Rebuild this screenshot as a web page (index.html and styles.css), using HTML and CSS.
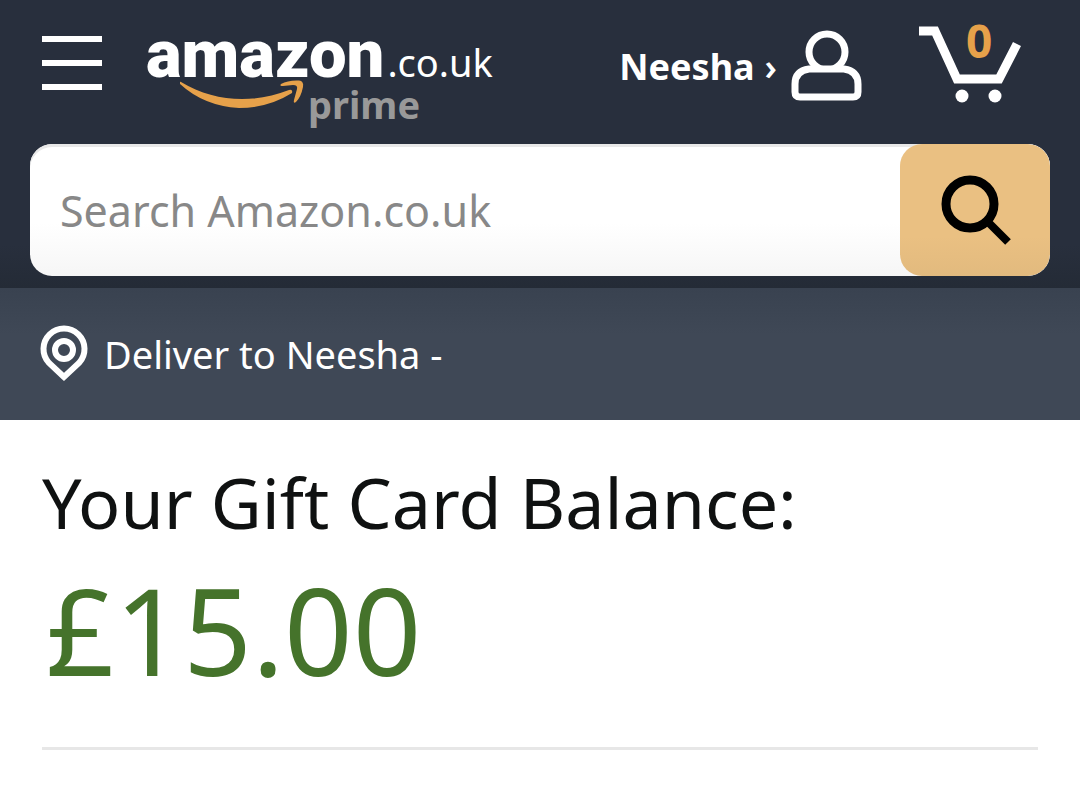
FILE: index.html
```html
<!DOCTYPE html>
<html lang="en-GB">
<head>
    <meta charset="utf-8">
    <meta name="viewport" content="width=device-width, initial-scale=1">
    <title>Your Gift Card Balance</title>
    <link rel="stylesheet" href="styles.css">
</head>
<body>
    <header class="header">
        <div class="nav-top">
            <button class="menu-button" type="button" aria-label="Menu">
                <span></span>
                <span></span>
                <span></span>
            </button>
            <a class="logo" href="#" aria-label="Amazon.co.uk Prime">
                <span class="logo-main">
                    <span class="logo-name">amazon</span><span class="logo-domain">.co.uk</span>
                </span>
                <span class="logo-sub">
                    <svg class="smile" width="124" height="29" viewBox="0 0 124 29" aria-hidden="true">
                        <path d="M1 2C34 22 73 24 109 10Q113 9 112 13Q88 28 59 28Q24 26 0 4Q-1 1 1 2Z" fill="#e6a14a"/>
                        <path d="M101 4Q108 0 119 .5Q124 1 123 7Q121 17 116 22Q113 24 114 20L117 9Q118 5 113 5L103 6Q99 6 101 4Z" fill="#e6a14a"/>
                    </svg>
                    <span class="logo-prime">prime</span>
                </span>
            </a>
            <a class="account" href="#">
                <span class="account-name">Neesha</span>
                <span class="account-arrow">›</span>
                <svg width="72" height="72" viewBox="0 0 72 72" fill="none" stroke="#fff" stroke-width="7" aria-hidden="true">
                    <circle cx="36" cy="22" r="18"/>
                    <path d="M18 39H53Q67 41 67 54V62Q67 67 62 67H9Q4 67 4 62V54Q4 41 18 39Z" fill="#282f3d" stroke-linejoin="round"/>
                </svg>
            </a>
            <a class="cart" href="#" aria-label="Basket, 0 items">
                <svg width="104" height="80" viewBox="0 0 104 80" aria-hidden="true">
                    <path d="M1 7H17L39 55H81L99 20" fill="none" stroke="#fff" stroke-width="9"/>
                    <circle cx="44" cy="72" r="6.500" fill="#fff"/>
                    <circle cx="77" cy="72" r="6.500" fill="#fff"/>
                </svg>
                <span class="cart-count">0</span>
            </a>
        </div>
        <form class="search">
            <input class="search-input" type="text" placeholder="Search Amazon.co.uk" aria-label="Search Amazon.co.uk">
            <button class="search-button" type="button" aria-label="Go">
                <svg width="72" height="72" viewBox="0 0 72 72" fill="none" stroke="#000" aria-hidden="true">
                    <circle cx="31" cy="30" r="24" stroke-width="9"/>
                    <path d="M48 47L69 68" stroke-width="8"/>
                </svg>
            </button>
        </form>
    </header>
    <a class="deliver" href="#">
        <svg width="48" height="58" viewBox="0 0 48 58" fill="none" stroke="#fff" aria-hidden="true">
            <path d="M24 52L9 38A20.500 20.500 0 1 1 39 38Z" stroke-width="6"/>
            <circle cx="24" cy="25" r="9" stroke-width="6"/>
        </svg>
        <span>Deliver to Neesha -</span>
    </a>
    <main class="balance">
        <h1>Your Gift Card Balance:</h1>
        <p class="amount">£15.00</p>
        <hr>
    </main>
</body>
</html>
```
FILE: styles.css
```css
* {
    box-sizing: border-box;
}
body {
    margin: 0;
    background-color: #fff;
    color: #0f1111;
    font-family: "Noto Sans", sans-serif;
}
a {
    color: #fff;
    text-decoration: none;
}
button {
    border: none;
    padding: 0;
    cursor: pointer;
}
svg {
    display: block;
    flex: none;
}

/* Header */
.header {
    padding: 0 30px 12px;
    background: linear-gradient(#282f3d 85%, #242b36);
}
.nav-top {
    display: flex;
    align-items: flex-start;
    height: 144px;
    padding: 24px 28px 0 12px;
}
.menu-button {
    display: flex;
    flex-direction: column;
    gap: 18px;
    width: 60px;
    margin-top: 12px;
    background: none;
}
.menu-button span {
    width: 100%;
    height: 6px;
    background-color: #fff;
}
.logo {
    margin-left: 44px;
}
.logo-main {
    display: flex;
    align-items: baseline;
    height: 56px;
    line-height: 60px;
}
.logo-name {
    font-family: "Roboto", sans-serif;
    font-size: 67px;
    font-weight: 900;
}
.logo-domain {
    margin-left: 3px;
    font-size: 38px;
}
.logo-sub {
    display: flex;
    gap: 4px;
    padding-left: 34px;
}
.logo-prime {
    color: #999;
    font-size: 38px;
    font-weight: bold;
    line-height: 48px;
}
.account {
    display: flex;
    align-items: center;
    margin-top: 6px;
    margin-left: auto;
    font-size: 36px;
}
.account-name {
    font-weight: bold;
}
.account-arrow {
    margin: 0 14px 0 10px;
    font-weight: 600;
}
.cart {
    position: relative;
    margin-left: 55px;
}
.cart-count {
    position: absolute;
    top: -8px;
    left: 48px;
    color: #e6a14a;
    font-size: 46px;
    font-weight: bold;
    line-height: 48px;
}

/* Search */
.search {
    display: flex;
    height: 132px;
    border-radius: 22px;
    background: linear-gradient(#fff 60%, #f6f6f6);
    box-shadow: inset 0 3px 0 #e8e8e8;
    overflow: hidden;
}
.search-input {
    flex: 1;
    min-width: 0;
    padding: 0 30px;
    border: none;
    outline: none;
    background: none;
    color: #111;
    font-family: inherit;
    font-size: 43px;
}
.search-input::placeholder {
    color: #888;
    opacity: 1;
}
.search-button {
    display: flex;
    align-items: center;
    justify-content: center;
    width: 150px;
    border-radius: 22px;
    background: linear-gradient(#eac082 70%, #e2ba7e);
}

/* Delivery address */
.deliver {
    display: flex;
    align-items: center;
    gap: 16px;
    height: 132px;
    padding: 0 40px;
    background: linear-gradient(#394250, #3f4856 35%);
    font-size: 38px;
}

/* Balance */
.balance {
    padding: 36px 42px;
}
h1 {
    margin: 0;
    font-size: 70px;
    font-weight: normal;
    line-height: 92px;
}
.amount {
    margin: 0;
    padding-left: 4px;
    color: #45732b;
    font-size: 120px;
    line-height: 164px;
}
hr {
    height: 3px;
    margin: 35px 0 0;
    border: none;
    background-color: #e7e7e7;
}
```
